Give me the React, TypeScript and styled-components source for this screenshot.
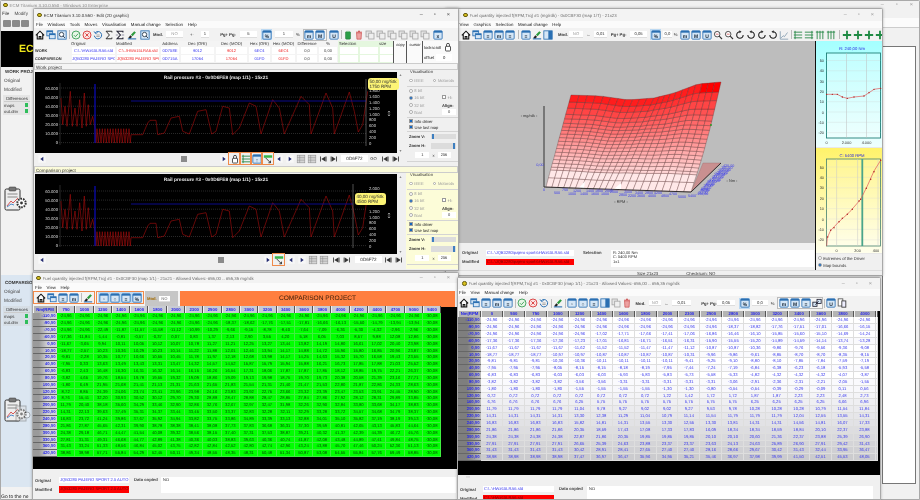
import React from "react";
import styled, { createGlobalStyle } from "styled-components";

const Global = createGlobalStyle`
  html, body { margin: 0; padding: 0; overflow: hidden; background: #f0f0f0; }
  * { box-sizing: border-box; }
  body { font-family: "Liberation Sans", Arial, sans-serif; text-rendering: geometricPrecision; }
`;

/* ---------- data ---------- */
const expand = (s: string) =>
  s.trim().split(/\s+/).flatMap((t) => {
    const [v, n] = t.split("*");
    return Array(n ? Number(n) : 1).fill(v) as string[];
  });

const NM = ["-110,00","-90,00","-70,00","-60,00","0,00","10,00","20,00","40,00","60,00","80,00","100,00","120,00","160,00","200,00","220,00","240,00","280,00","300,00","330,00","360,00","420,00"];
const GREEN_COLS = ["750","1000","1200","1400","1600","1800","2000","2300","2500","2800","3000","3200","3400","3600","3800","4000","4200","4400","4700","5000","5400"];
const WHITE_COLS = ["0","500","750","1000","1200","1400","1600","1800","2000","2300","2500","2800","3000","3200","3400","3600","3800","4000"];

const GREEN = [
  "-24,96*20 -30,08",
  "-24,96*9 -18,37 -18,62 -17,76 -17,51 -17,81 -16,66 -16,13 -15,50 -14,79 -13,94 -13,94 -30,08",
  "-24,96*2 -22,49 -11,87 -11,57 -11,58 -11,12 -10,99 -10,29 -9,66 -9,15 -8,78 -8,40 -7,64 -7,09 -6,36 -5,30 -4,32 -2,96 -2,96 -30,08",
  "-17,36 -11,84 -1,44 -0,81 -0,57 -0,37 0,07 0,83 1,37 2,13 2,90 3,55 4,20 5,18 6,05 7,03 8,57 9,88 12,08 12,86 -30,08",
  "-11,67 -3,65 9,94 10,11 10,05 10,12 10,07 10,78 11,27 11,21 12,25 13,27 13,44 13,82 14,19 14,80 16,61 17,02 20,40 23,98 -30,08",
  "-18,77 -2,57 10,23 10,36 10,29 10,23 10,14 11,22 11,88 12,01 12,46 13,94 14,17 14,88 14,72 15,96 15,80 16,85 20,96 23,87 -30,08",
  "-9,81 -2,28 10,35 10,77 10,66 10,55 10,45 11,78 11,97 12,18 12,68 13,98 14,17 14,25 14,63 15,32 15,70 16,58 19,43 23,55 -30,08",
  "-7,95 0,33 13,63 13,49 13,43 13,31 13,47 14,32 14,57 14,52 15,87 15,79 15,94 15,88 16,21 16,73 17,85 17,88 21,03 25,52 -30,08",
  "-6,83 2,43 16,48 16,30 16,31 16,32 16,14 16,15 16,26 16,54 17,31 18,06 17,87 17,87 17,85 18,12 18,85 19,75 22,21 26,37 -30,08",
  "-3,82 4,65 19,76 18,54 19,78 19,55 19,32 19,09 18,86 19,09 19,13 19,98 18,75 19,70 19,73 20,38 20,58 21,39 23,16 27,71 -30,08",
  "-1,80 6,49 21,95 21,68 21,41 21,13 21,31 21,63 21,65 21,83 21,54 21,31 21,40 21,47 21,53 22,80 21,87 22,86 24,33 28,63 -30,08",
  "8,72 8,85 24,39 24,06 23,74 23,41 23,96 23,98 24,16 23,83 23,92 22,75 23,66 23,32 23,39 23,47 23,53 23,91 24,45 28,90 -30,08",
  "8,76 15,41 32,20 30,93 30,52 30,12 29,70 29,30 28,88 28,47 28,88 28,47 28,85 27,84 27,86 27,92 28,12 28,31 29,89 33,85 -30,08",
  "11,79 20,40 38,18 35,60 34,29 33,46 32,90 32,86 32,76 32,67 32,97 32,47 31,98 32,26 32,90 32,84 33,80 33,68 34,17 38,83 -30,08",
  "14,31 22,13 39,63 37,49 35,31 34,37 33,44 33,45 33,50 33,37 32,83 32,28 32,11 32,29 33,28 33,72 34,57 34,68 34,79 38,37 -30,08",
  "16,83 23,72 41,24 39,86 37,67 35,92 34,94 33,82 33,75 33,86 34,89 33,39 33,13 32,88 34,01 35,10 35,82 37,19 38,19 39,13 -30,08",
  "21,86 27,87 45,65 42,31 39,90 38,78 38,38 38,41 38,08 37,73 37,83 36,68 36,31 37,30 39,59 40,81 42,65 43,13 45,83 44,64 -30,08",
  "24,38 29,18 46,71 44,47 41,54 40,08 39,32 38,56 38,15 37,40 37,31 37,53 38,87 39,21 40,32 41,37 42,39 44,39 46,72 45,76 -30,08",
  "27,81 31,31 49,31 46,68 44,77 42,89 41,38 40,36 40,03 38,83 39,63 40,36 40,74 41,87 42,08 43,48 44,89 47,41 49,84 48,75 -30,08",
  "31,43 33,24 51,33 48,56 46,84 45,02 43,75 42,82 42,84 42,52 42,80 42,74 42,96 43,24 43,88 45,70 47,46 50,24 52,36 51,13 -30,08",
  "38,86 38,98 57,71 55,84 54,29 52,45 50,11 49,34 48,55 48,35 48,31 50,48 51,34 50,87 53,08 54,55 55,84 57,76 59,49 58,85 -30,08",
].map(expand);

const WHITE = [
  "-24,96*18",
  "-24,96*11 -18,37 -18,82 -17,76 -17,51 -17,01 -16,66 -16,15",
  "-24,96*5 -17,02 -17,71 -17,66 -17,41 -17,06 -16,86 -16,46 -16,10 -15,85 -15,60 -15,10 -14,69 -14,24",
  "-17,36*4 -17,23 -17,01 -16,81 -16,71 -16,51 -16,31 -15,90 -15,55 -15,20 -14,89 -14,59 -14,14 -13,74 -13,28",
  "-11,67*4 -11,62 -11,52 -11,52 -11,47 -11,47 -11,12 -10,87 -10,87 -10,36 -9,86 -9,76 -9,56 -9,36 -9,08",
  "-18,77*3 -10,97 -10,97 -10,87 -10,87 -10,87 -10,87 -10,31 -9,96 -9,86 -9,61 -8,85 -8,70 -8,70 -8,35 -8,15",
  "-9,81*3 -10,36 -10,36 -10,11 -10,11 -10,11 -10,11 -9,41 -9,25 -9,10 -8,80 -8,10 -7,85 -7,84 -7,59 -7,19",
  "-7,95*3 -8,05 -8,15 -8,15 -8,18 -8,19 -7,95 -7,44 -7,24 -7,19 -6,84 -6,38 -6,23 -6,18 -5,93 -5,58",
  "-6,83*3 -6,03 -6,03 -6,03 -5,93 -5,83 -5,83 -5,73 -5,58 -5,33 -4,82 -4,32 -4,32 -4,32 -4,07 -3,87",
  "-3,82*4 -3,56 -3,56 -3,31*5 -3,06 -2,91 -2,36 -2,31 -2,21 -2,05 -1,55",
  "-1,80*4 -1,55*4 -1,30 -1,30 -0,80 -0,54 -0,54 -0,39 -0,29 -0,09 0,11 0,56",
  "0,72*8 1,22 1,42 1,72 1,72 1,87 1,87 2,23 2,23 2,48 2,73",
  "6,76*4 6,25 5,75*7 6,25*4 6,66 6,96",
  "11,79*4 11,04 9,78 9,27 9,02 9,02 9,27 9,53 9,78 10,28 10,28 10,28 10,79 11,54 11,84",
  "14,31*4 13,30 12,38 11,29 11,04 10,79 11,14 11,54 11,79 11,79 11,79 12,04 12,55 13,55 14,31",
  "16,83*4 15,82 14,81 14,31 13,55 13,30 12,55 13,30 13,81 14,31 14,31 14,56 14,81 16,07 17,33",
  "21,86*4 20,35 18,59 17,43 17,08 17,33 17,83 16,09 18,34 18,34 18,59 18,84 20,10 22,37 23,88",
  "24,38*4 22,87 21,86 20,35 19,85 19,85 19,85 20,10 20,10 20,60 21,36 22,37 23,88 25,39 26,90",
  "27,91*4 26,65 25,39 24,63 23,88 23,37 23,37 23,63 24,13 24,63 25,89 26,90 27,91 29,42 31,43",
  "31,43*4 30,42 28,91 28,41 27,65 27,40 27,40 28,16 28,66 29,67 30,42 31,43 32,44 33,95 36,47",
  "38,98*4 37,47 36,97 36,47 35,96 34,95 35,21 35,46 36,97 37,98 39,99 41,50 42,51 45,53 48,05",
].map((s) => expand(s).slice(0, 18));

/* ---------- desktop and windows ---------- */
const Desktop = styled.div`
  position: relative; width: 920px; height: 500px; overflow: hidden; background: #f1f1f1; color: #222; font-size: 4.6px; filter: blur(0.3px);
`;
const Win = styled.section<{ $x: number; $y: number; $w: number; $h: number; $z: number; $bg?: string }>`
  position: absolute; left: ${(p) => p.$x}px; top: ${(p) => p.$y}px; width: ${(p) => p.$w}px; height: ${(p) => p.$h}px; z-index: ${(p) => p.$z};
  background: ${(p) => p.$bg || "#f0f0f0"}; display: flex; flex-direction: column; overflow: hidden;
  border: 0.5px solid #a9a9a9; box-shadow: 0 0 3px rgba(0,0,0,.28); border-radius: 1.5px 1.5px 0 0;
`;
const TitleBar = styled.header<{ $h: number; $pad: number; $dim?: boolean }>`
  height: ${(p) => p.$h}px; flex: none; display: flex; align-items: center; gap: 2px; padding: 0 4px 0 ${(p) => p.$pad}px; background: #f3f3f3;
  color: ${(p) => (p.$dim ? "#6e6e6e" : "#333")}; font-size: 4.35px; white-space: nowrap;
`;
const TitleIcon = styled.i`
  width: 4.6px; height: 4.6px; border-radius: 50%; background: #d8c01c; border: 0.6px solid #665c10; flex: none;
`;
const TitleText = styled.span` flex: 1; overflow: hidden; `;
const Caption = styled.span<{ $dim?: boolean }>`
  display: flex; gap: 11px; font-size: 5.5px; color: ${(p) => (p.$dim ? "#999" : "#444")}; padding-right: 4px; align-items: center;
`;
const MenuBar = styled.nav<{ $h: number; $pad: number }>`
  height: ${(p) => p.$h}px; flex: none; display: flex; align-items: center; gap: 4.6px; padding-left: ${(p) => p.$pad}px; background: #fbfbfb; font-size: 4.35px; color: #222; white-space: nowrap;
`;
const Toolbar = styled.div<{ $h: number; $pad?: number }>`
  height: ${(p) => p.$h}px; flex: none; display: flex; align-items: center; padding-left: ${(p) => p.$pad || 0}px; background: #f2f2f2; white-space: nowrap; font-size: 4.3px;
  position: relative;
`;
const Tool = styled.span<{ $on?: boolean; $mark?: boolean }>`
  width: 11px; height: 11px; flex: none; display: flex; align-items: center; justify-content: center;
  background: ${(p) => (p.$on ? "#bcd9f2" : "transparent")}; outline: ${(p) => (p.$mark ? "0.8px solid #ef8a4a" : "none")}; outline-offset: -0.6px;
`;
const Space = styled.span<{ $w: number }>` width: ${(p) => p.$w}px; flex: none; `;
const Sep = styled.span<{ $w: number }>`
  width: ${(p) => p.$w}px; flex: none; height: 9px; position: relative;
  &::after { content: ""; position: absolute; left: 50%; top: 0; bottom: 0; width: 0.5px; background: #bbb; }
`;
const Lbl = styled.span<{ $w: number; $b?: boolean }>`
  width: ${(p) => p.$w}px; flex: none; font-weight: ${(p) => (p.$b ? 700 : 400)}; color: #333; font-size: 4.2px; text-align: center;
`;
const Field = styled.span<{ $w: number; $grey?: boolean }>`
  width: ${(p) => p.$w}px; height: 6.5px; flex: none; background: #fff; color: ${(p) => (p.$grey ? "#999" : "#333")}; font-size: 4.2px; line-height: 6.5px; text-align: center; border-bottom: 0.4px solid #ddd;
`;
const GroupBox = styled.span`
  display: flex; align-items: center; height: 12px; flex: none; border: 0.5px solid #bbb; background: #f6f6f6;
`;

/* ---------- icons ---------- */
type K = "home"|"stack"|"win"|"check"|"cancel"|"undo"|"sigma"|"sigma2"|"brush"|"mag"|"magb"|"green"|"red"|"copy"|"rot"|"rotb"|"graph"|"lines"|"lines2"|"vlines"|"plus"|"tail"|"lock"|"l"|"r"|"first"|"last"|"grid"|"split"|"phones"|"pair";
const Blue = "#2a6fb2", Pale = "#d5e6f6";
const Ico = ({ k, t }: { k: K; t?: string }) => {
  const c: Record<K, React.ReactNode> = {
    home: <path d="M1 6.4 6 1.4l5 5M2.7 5v5.8h6.6V5M5 10.8V7.8h2v3" fill="#fff" stroke="#111" strokeWidth="1.3" />,
    stack: <><rect x="1" y="1" width="7" height="6" fill={Pale} stroke={Blue} /><rect x="1" y="1" width="7" height="1.6" fill={Blue} /><rect x="4" y="4.5" width="7" height="6" fill={Pale} stroke={Blue} /><rect x="4" y="4.5" width="7" height="1.6" fill={Blue} /></>,
    win: <><rect x="1" y="1" width="10" height="10" rx="1" fill={Pale} stroke={Blue} /><rect x="1" y="1" width="10" height="2.2" fill={Blue} /><text x="6" y="9.6" fontSize="6" fontWeight="700" textAnchor="middle" fill="#123">{t}</text></>,
    check: <><circle cx="6" cy="6" r="4.8" fill="#e6f6e6" stroke="#3fa15a" strokeWidth="1.1" /><path d="M3.5 6.2 5.3 8l3.3-3.6" fill="none" stroke="#3fa15a" strokeWidth="1.1" /></>,
    cancel: <><circle cx="6" cy="6" r="4.8" fill="#fbe4e4" stroke="#d93a3a" strokeWidth="1.1" /><path d="m4 4 4 4m0-4-4 4" stroke="#d93a3a" strokeWidth="1.1" /></>,
    undo: <><path d="M2.6 3.4A4.4 4.4 0 1 1 1.6 6.8" fill="none" stroke={Blue} strokeWidth="1.2" /><path d="M1.2 1.6 3 4.4l2.6-1.4" fill="none" stroke={Blue} strokeWidth="1" /><path d="M4 6h4M4 7.8h4" stroke="#777" strokeWidth=".7" /></>,
    sigma: <path d="M9.5 3V1.5h-7L6.5 6l-4 4.5h7V9" fill="none" stroke="#222" strokeWidth="1.1" />,
    sigma2: <><path d="M9.5 3V1.5h-7L6.5 6l-4 4.5h7V9" fill="none" stroke="#223" strokeWidth="1.3" /><path d="M1 6h3M8 6h3" stroke="#557" strokeWidth=".7" /></>,
    brush: <><path d="M1.5 9.5 4 6.3l2 1.8-2.2 2.6z" fill="#222" /><path d="m4.7 5.6 4-4.2 2 1.7-4 4.4z" fill="#2f9c3f" /><rect x="1" y="10" width="10" height="1.3" fill="#2a6fb2" /></>,
    mag: <><circle cx="5" cy="5" r="3.3" fill="#fff" stroke="#333" /><path d="m7.4 7.4 3.4 3.4" stroke="#333" strokeWidth="1.4" /><path d="M3.3 5h3.4" stroke="#c33" strokeWidth=".8" /></>,
    magb: <><rect x="1" y="1" width="10" height="10" fill={Pale} stroke={Blue} /><circle cx="5.4" cy="5.4" r="2.6" fill="#fff" stroke="#234" /><path d="m7.4 7.4 2 2" stroke="#234" strokeWidth="1.2" /></>,
    green: <><rect x="3" y="2" width="6" height="9" rx="1" fill="#2a9d46" stroke="#17652b" strokeWidth=".5" /><rect x="4.2" y="1" width="3.6" height="1.3" fill="#8ccf9a" /></>,
    red: <><path d="M3 3.4h6l-.5 7.6h-5z" fill="#eda1a1" stroke="#c54040" strokeWidth=".7" /><rect x="2.4" y="2" width="7.2" height="1.3" fill="#d96a6a" /><path d="M4.8 1h2.4v1H4.8z" fill="#c54040" /></>,
    copy: <><rect x="1.2" y="1.2" width="6.4" height="7" fill="#e4e4e4" stroke="#a6a6a6" /><rect x="4.4" y="3.8" width="6.4" height="7" fill="#efefef" stroke="#a6a6a6" /></>,
    rot: <><path d="M9.8 6A3.9 3.9 0 1 1 6 2.1" fill="none" stroke="#222" strokeWidth="1.3" /><path d="M5.2 .4 7.8 2.2 5.4 4z" fill="#222" /></>,
    rotb: <><path d="M2.2 6A3.9 3.9 0 1 0 6 2.1" fill="none" stroke="#222" strokeWidth="1.3" /><path d="M6.8 .4 4.2 2.2 6.6 4z" fill="#222" /></>,
    graph: <path d="M1.5 1.5v9.5h9.5M2.5 9.5l2.5-2.6 1.6 1L10.2 3" fill="none" stroke="#68869e" strokeWidth=".8" />,
    lines: <path d="M2.5 1v10M1 2.6h10M1 6h10M1 9.4h10" stroke="#2c8a4a" strokeWidth="1.1" />,
    lines2: <path d="M9.5 1v10M1 2.6h10M1 6h10M1 9.4h10" stroke="#2c8a4a" strokeWidth="1.1" />,
    vlines: <path d="M1 2.5h10M2.6 1v10M6 1v10M9.4 1v10" stroke="#2c8a4a" strokeWidth="1.1" />,
    plus: <path d="M6 1v10M1 6h10" stroke="#1f8a44" strokeWidth="2.2" />,
    tail: <><rect x="1" y="1.5" width="10" height="3" fill="#39b54a" /><path d="M3 4.5l6 6M9 10.5H6.5M9 10.5V8" stroke="#222" strokeWidth="1" fill="none" /></>,
    lock: <><rect x="3" y="5.2" width="6" height="5.6" rx=".8" fill="#fff" stroke="#333" /><path d="M4.2 5.2V3.4a1.8 1.8 0 0 1 3.6 0v1.8" fill="none" stroke="#333" /></>,
    l: <><rect x="1.6" y="1.6" width="8.8" height="8.8" fill="#f8f8f8" /><path d="M7.6 3.4 4 6l3.6 2.6z" fill="#222a70" /></>,
    r: <><rect x="1.6" y="1.6" width="8.8" height="8.8" fill="#f8f8f8" /><path d="M4.4 3.4 8 6 4.4 8.6z" fill="#222a70" /></>,
    first: <path d="M2.5 3v6h1V3zM8.8 3 4 6l4.8 3zM9.2 3h1v6h-1z" fill="#333" />,
    last: <path d="M2 3h1v6H2zM3.4 3 8 6 3.4 9zM8.6 3h1v6h-1z" fill="#333" />,
    grid: <><rect x="1.4" y="1.4" width="9.2" height="9.2" fill="#d5d5d5" stroke="#888" strokeWidth=".6" /><path d="M1.4 4.4h9M1.4 7.4h9M4.4 1.4v9" stroke="#888" strokeWidth=".6" /></>,
    split: <><rect x="1" y="1" width="10" height="10" fill={Pale} stroke={Blue} /><rect x="6.4" y="1" width="4.6" height="10" fill={Blue} /></>,
    phones: <><rect x="1.4" y="1" width="5.6" height="8.6" fill="#fff" stroke="#555" /><rect x="5.8" y="3.5" width="4.8" height="7.5" fill="#eef" stroke="#333" /></>,
    pair: <><rect x="1" y="5" width="5" height="5" fill={Pale} stroke="#223" /><rect x="6" y="1.6" width="5" height="5" fill={Pale} stroke="#223" /><path d="m4 8 4-4" stroke="#223" /></>,
  };
  return <svg width="10" height="10" viewBox="0 0 12 12" aria-hidden="true">{c[k]}</svg>;
};
const T = ({ k, t, on, mark }: { k: K; t?: string; on?: boolean; mark?: boolean }) => (
  <Tool $on={on} $mark={mark}><Ico k={k} t={t} /></Tool>
);

/* ---------- back window ---------- */
const BackTitle = styled.div`
  height: 8px; flex: none; display: flex; align-items: center; gap: 2px; padding-left: 2px; color: #8c8c8c; font-size: 4.4px; white-space: nowrap;
`;
const BackCaption = styled.span`
  margin-left: auto; display: flex; gap: 12px; color: #999; font-size: 5.5px; padding-right: 6px;
`;
const BackMenu = styled.div`
  height: 8px; flex: none; display: flex; align-items: center; gap: 5px; padding-left: 1px; font-size: 4.6px; color: #444;
`;
const BackTools = styled.div`
  height: 12px; flex: none; display: flex; align-items: center; gap: 1px; padding-left: 2px;
`;
const RightStrip = styled.div`
  margin-left: auto; width: 37px; height: 10px; background: #fbfbfb; border-bottom: .5px solid #ccc; border-left: .5px solid #ddd;
`;
const Folder = styled.i`
  width: 8px; height: 7px; background: #8a8a8a; border-radius: 1px;
`;
const BackRow = styled.div` display: flex; flex: 1; min-height: 0; `;
const Sidebar = styled.aside`
  width: 33px; flex: none; display: flex; flex-direction: column; background: #f2f2f2; overflow: hidden; border-right: 1px solid #cfcfcf;
`;
const Logo = styled.div`
  height: 36px; flex: none; margin-top: 2px; background: #000; color: #ece51a; font: 700 10.5px "Liberation Sans", sans-serif; display: flex; align-items: center; padding-left: 18px; overflow: hidden; white-space: nowrap;
`;
const Section = styled.div<{ $top: number; $h: number; $bg?: string }>`
  margin-top: ${(p) => p.$top}px; height: ${(p) => p.$h}px; flex: none; background: ${(p) => p.$bg || "transparent"}; display: flex; flex-direction: column; position: relative;
`;
const SideHead = styled.div<{ $top?: number }>` font-weight: 700; font-size: 4.5px; height: 8px; line-height: 8px; padding-left: 4px; white-space: nowrap; color: #333; margin-top: ${(p) => p.$top || 0}px; `;
const SideRow = styled.div` font-size: 4.7px; height: 9px; line-height: 9px; padding-left: 3px; color: #444; white-space: nowrap; `;
const DiffBox = styled.div`
  margin: 1px 3px 0 2px; display: flex; flex-direction: column; padding: 1px 0 1px 1px; font-size: 4.3px; color: #333; background: rgba(205,205,205,.35);
`;
const DiffHead = styled.div` text-align: center; height: 6px; line-height: 6px; border-bottom: .5px solid #ccc; `;
const DiffRow = styled.div` display: flex; justify-content: space-between; align-items: center; height: 6px; padding-right: 2px; `;
const Led = styled.i` width: 3.4px; height: 3.4px; background: #2fbe5b; `;
const Clip = styled.div<{ $top: number }>` margin: ${(p) => p.$top}px 0 0 3px; flex: none; `;
const Hint = styled.div` position: absolute; left: 1px; top: 494px; font-size: 5px; color: #222; white-space: nowrap; z-index: 1; `;
const BackContent = styled.div`
  flex: 1; position: relative; display: flex; justify-content: flex-end;
`;
const BackPanel = styled.div`
  width: 34px; height: 438px; margin: 17px 3px 0 0; background: #fff; border: .5px solid #777; border-width: .5px 1px 1px .5px;
`;

const Clipboard = ({ ghost }: { ghost?: boolean }) => (
  <svg width={ghost ? 27 : 23} height="26" viewBox={ghost ? "0 0 27 26" : "0 0 23 26"} aria-hidden="true">
    <rect x="1" y="3" width="15" height="21" rx="1.5" fill="#eee" stroke="#333" strokeWidth="1" />
    <rect x="5" y="1" width="7" height="4" rx="1" fill="#777" stroke="#333" strokeWidth=".5" />
    <path d="M3.5 8h10M3.5 11h10" stroke="#aaa" strokeWidth="1.3" />
    <path d="m3 20 4-5 2 2 5-5" fill="none" stroke="#d24444" strokeWidth=".9" />
    <path d="m3 21 4-3 3 1" fill="none" stroke="#3b7dc4" strokeWidth=".9" />
    <circle cx="17.5" cy="17" r="4.2" fill="#fff" stroke="#333" strokeWidth="2" strokeDasharray="1.6 1" />
    <circle cx="17.5" cy="17" r="1.4" fill="#333" />
    {ghost && <g opacity=".45"><rect x="12" y="9" width="10" height="15" fill="#ddd" stroke="#666" /><circle cx="23" cy="18" r="3" fill="#fff" stroke="#666" /></g>}
  </svg>
);

/* ---------- main edit window ---------- */
const InfoGrid = styled.div`
  height: 22px; flex: none; display: grid; padding-left: 1px; background: #f4f4f4; font-size: 4.2px; align-items: center; text-align: center;
  grid-template-columns: 36px 45px 44px 20px 35px 33px 23px 25px 22px 20px 20px 20px 15px 13px 16px 1fr;
  grid-template-rows: 5px 8.5px 8.5px;
`;
const InfoHead = styled.span<{ $l?: boolean }>` color: #333; white-space: nowrap; text-align: ${(p) => (p.$l ? "left" : "center")}; `;
const InfoLab = styled.span` font-weight: 700; font-size: 3.9px; text-align: left; color: #333; `;
const InfoVal = styled.span<{ $c: string }>`
  background: #fff; color: ${(p) => p.$c}; margin: 0 1px; height: 7px; line-height: 7px; overflow: hidden; white-space: nowrap; font-size: 4.1px;
`;
const SelCell = styled.span`
  background: #fff; margin: 0 .5px; height: 7px; flex: 1;
`;
const GreenBack = styled.span<{ $col?: string }>`
  grid-column: ${(p) => p.$col || "auto"}; background: #e5f7df; align-self: stretch; display: flex; align-items: center; padding-left: 1px; color: #333; white-space: nowrap;
`;
const InfoCol = styled.div<{ $col: number }>`
  grid-column: ${(p) => p.$col}; grid-row: 1 / 4; align-self: stretch; border-left: .8px solid #555; display: flex; flex-direction: column; font-size: 4px; padding: 1px 0 0 1px; background: #fafafa; white-space: nowrap; overflow: hidden;
`;
const LockRow = styled.div`
  display: flex; align-items: center; gap: 2px; font-size: 4.2px; white-space: nowrap; height: 11px;
`;
const OffField = styled.span`
  background: #fff; width: 16px; height: 7px; line-height: 7px; text-align: center;
`;
const ProjectBar = styled.div<{ $y?: boolean }>`
  height: 7px; flex: none; line-height: 7px; padding-left: 1px; font-size: 4.6px; color: #333; background: ${(p) => (p.$y ? "#fbfbda" : "#f4f4f4")}; border: .4px solid #ccc;
`;
const Pane = styled.div<{ $h: number }>` height: ${(p) => p.$h}px; flex: none; display: flex; background: #f0f0f0; `;
const PaneLeft = styled.div` width: 370px; flex: none; display: flex; flex-direction: column; `;
const ChartRow = styled.div<{ $mt: number; $h: number }>` display: flex; height: ${(p) => p.$h}px; margin-top: ${(p) => p.$mt}px; flex: none; `;
const ChartBlack = styled.div`
  width: 362px; margin-left: 1px; height: 100%; background: #000; flex: none; position: relative;
`;
const VScroll = styled.div`
  flex: 1; display: flex; flex-direction: column; justify-content: space-between; align-items: center; color: #888; font-size: 4px; background: #f0f0f0;
`;
const Tip = styled.div<{ $x: number; $y: number }>`
  position: absolute; left: ${(p) => p.$x}px; top: ${(p) => p.$y}px; background: #fdf475; border-radius: 3px; padding: .6px 1px .6px 1.4px; color: #333; font-size: 4.6px; line-height: 5.4px; white-space: nowrap; width: 31px; z-index: 4;
`;
const BottomBar = styled.div`
  height: 11px; flex: none; display: flex; align-items: center; white-space: nowrap; font-size: 4.4px; position: relative;
`;
const Thumb = styled.i` width: 6px; height: 6px; background: #8b8b8b; flex: none; `;
const GoField = styled.span`
  width: 27px; height: 7px; line-height: 7px; text-align: center; background: #fff; font-size: 4.6px; color: #333; flex: none;
`;
const Side = styled.aside<{ $y?: boolean }>`
  width: 54px; flex: none; margin-left: 2px; display: flex; flex-direction: column; padding: 0 1px; font-size: 4.1px; color: #444; background: ${(p) => (p.$y ? "#fcfcd8" : "#f0f0f0")};
`;
const SideLegend = styled.div` height: 5.5px; line-height: 4px; padding-left: 3px; color: #333; white-space: nowrap; `;
const SideBlock = styled.div<{ $h: number }>`
  height: ${(p) => p.$h}px; flex: none; border-bottom: .5px solid #d4d4d4; position: relative; display: flex; flex-direction: column; justify-content: space-around; padding: .5px 0 .5px 2px;
`;
const OptRow = styled.div` display: flex; align-items: center; gap: 1.5px; color: #9a9a9a; white-space: nowrap; `;
const Dot = styled.i<{ $on?: boolean }>`
  width: 3.8px; height: 3.8px; border-radius: 50%; border: .5px solid #aaa; background: ${(p) => (p.$on ? "#1b6cc2" : "#fff")}; flex: none; box-shadow: ${(p) => (p.$on ? "0 0 0 .6px #1b6cc2 inset" : "none")};
`;
const Box = styled.i<{ $on?: boolean }>`
  width: 4px; height: 4px; background: ${(p) => (p.$on ? "#1466c0" : "#fff")}; border: .4px solid #999; flex: none;
`;
const CheckRow = styled.div` display: flex; align-items: center; gap: 1.5px; color: #222; white-space: nowrap; `;
const AlignBox = styled.div`
  position: absolute; right: 3px; top: 8px; display: flex; flex-direction: column; gap: 1.5px; align-items: flex-start; color: #333; font-weight: 700;
`;
const SpinBox = styled.span<{ $w: number }>`
  width: ${(p) => p.$w}px; height: 5.6px; line-height: 5.6px; background: #fff; text-align: center; color: #333; font-size: 4px; font-weight: 400; display: inline-block;
`;
const ZoomRow = styled.div` display: flex; align-items: center; justify-content: space-between; font-weight: 700; color: #333; white-space: nowrap; padding-right: 3px; `;
const Track = styled.div<{ $end?: boolean }>`
  width: 25px; height: 5.4px; background: #dcdcdc; display: flex; justify-content: ${(p) => (p.$end ? "flex-end" : "flex-start")}; padding: 0 .8px;
`;
const Knob = styled.i` width: 2.4px; height: 5.4px; background: #3e7fc0; `;
const SpinRow = styled.div` display: flex; align-items: center; gap: 3px; justify-content: center; color: #333; padding-right: 2px; `;

/* 2D chart */
const Z = [[180,210],[185,290],[192,235],[198,295],[208,190],[214,295],[222,240],[228,295],[236,215],[243,300],[250,195],[256,295],[262,230],[268,290],[275,265],[282,300],[285,345]];
const Z2 = [[390,320],[425,320],[440,285],[447,277],[465,277],[470,320],[490,315],[510,270],[535,265],[545,310],[565,318],[590,250],[615,245],[632,318],[645,310],[665,235],[685,240],[695,320],[715,300],[745,225],[765,235],[780,318],[815,215],[835,240],[850,318],[900,205],[925,230],[930,318],[975,195],[995,240],[1000,318],[1045,192],[1060,250],[1072,312],[1085,290],[1100,190]];
const makeTrace = (dy: number) => {
  const dense: number[][] = [];
  for (let x = 288; x < 390; x += 4) dense.push([x, x % 8 === 0 ? 302 : 345]);
  return [...Z, ...dense, ...Z2].map(([x, y]) => `${(x / 3 - 34).toFixed(1)},${(y / 3 - 43 + dy).toFixed(1)}`).join(" ");
};
const LEFT_AX = ["60.000","50.000","40.000","30.000","20.000","10.000","0"];
const RIGHT_AX = ["2.000","1.800","1.600","1.400","1.200","1.000","800","600","400","200","0"];
const Chart2D = ({ curX, blueY, dy, hidden }: { curX: number; blueY: number; dy: number; hidden: string[] }) => (
  <svg width="362" height="81" viewBox="0 0 362 81" aria-label="Rail pressure chart" style={{ display: "block" }}>
    <text x="181" y="7" fontSize="4.8" fontWeight="700" fill="#e8e8e8" textAnchor="middle">Rail pressure #3 - 0x0D6FE8 (map 1/1) - 15x21</text>
    <line x1="25" x2="25" y1="11" y2="73" stroke="#444" strokeWidth=".6" />
    {LEFT_AX.map((t, i) => (
      <g key={t}>
        <line x1="22" x2="331" y1={17 + i * 9.1 + dy} y2={17 + i * 9.1 + dy} stroke="#777" strokeWidth=".35" strokeDasharray="1 1" />
        <text x="23" y={18.5 + i * 9.1 + dy} fontSize="4.2" fill="#d8d8d8" textAnchor="end">{t}</text>
      </g>
    ))}
    {RIGHT_AX.filter((t) => !hidden.includes(t)).map((t) => (
      <text key={t} x="334" y={15.5 + RIGHT_AX.indexOf(t) * 5.8 + dy} fontSize="4.2" fill="#d8d8d8">{t}</text>
    ))}
    <polyline points={makeTrace(dy)} fill="none" stroke="#a80d0d" strokeWidth=".6" />
    <line x1="60" x2="60" y1="12" y2={72 + dy} stroke="#0a0ab0" strokeWidth="1.3" />
    <line x1="96" x2={curX} y1={blueY} y2={blueY} stroke="#0c0c9a" strokeWidth=".9" />
    <line x1={curX} x2={curX} y1={dy < 0 ? 7 : 10} y2="74" stroke="#888" strokeWidth=".6" />
    <path d="M354 39v5m-1.2-3.8 1.2-1.2 1.2 1.2m-2.4 2.6 1.2 1.2 1.2-1.2" stroke="#ddd" strokeWidth=".5" fill="none" />
  </svg>
);

const SidePanel = ({ y }: { y?: boolean }) => (
  <Side $y={y}>
    <SideLegend>Visualisation</SideLegend>
    <SideBlock $h={11}><OptRow><Dot /> IEEE <Space $w={6} /> <Dot /> Motorola</OptRow></SideBlock>
    <SideBlock $h={31}>
      <OptRow><Dot /> 8 bit</OptRow>
      <OptRow><Dot $on /> 16 bit</OptRow>
      <OptRow><Dot /> 32 bit</OptRow>
      <OptRow><Dot /> float</OptRow>
      <AlignBox><OptRow><Box /> +/-</OptRow><Space $w={1} />Align:<SpinBox $w={14}>0</SpinBox></AlignBox>
    </SideBlock>
    <SideBlock $h={14}>
      <CheckRow><Box $on /> Info driver</CheckRow>
      <CheckRow><Box $on /> Use last map</CheckRow>
    </SideBlock>
    <SideBlock $h={30}>
      <ZoomRow>Zoom V:<Track><Knob /></Track></ZoomRow>
      <ZoomRow>Zoom H:<Track $end><Knob /></Track></ZoomRow>
      <SpinRow><SpinBox $w={14}>1</SpinBox> x <SpinBox $w={13}>256</SpinBox></SpinRow>
    </SideBlock>
  </Side>
);

const infoCols = ["Original","Modified","Address","Dec (ORI)","Dec (MOD)","Hex (ORI)","Hex (MOD)","Difference","%"];
const workRow = ["C:\\..\\HW#15LRA6.std","C:\\..\\HW#15LRA6.std","0D758E","9012","9012","6EC4","6EC4","0,0","0,00"];
const cmpRow = ["JQB3280 PAJERO SPOI","JQB3280 PAJERO SPOI","0D715A","17064","17064","01FD","01FD","0,0","0,00"];
const colorsFor = (i: number) => (i === 0 || i === 2 || i === 3 || i === 5 ? "#3434f0" : i === 1 || i === 4 || i === 6 ? "#f02020" : "#444");

/* ---------- 3D window ---------- */
const View3D = styled.div` flex: 1; min-height: 0; display: flex; background: #bdbdbd; `;
const ViewLeft = styled.div` flex: 1; min-width: 0; display: flex; flex-direction: column; `;
const Plot3D = styled.div` flex: 1; min-height: 0; background: #bdbdbd; padding-left: 15px; `;
const Graphs = styled.aside`
  width: 67px; flex: none; border-left: 1.4px solid #111; display: flex; flex-direction: column; background: #f0f0f0;
`;
const GraphBox = styled.div<{ $h: number; $a: string; $b: string }>`
  height: ${(p) => p.$h}px; flex: none; background: linear-gradient(${(p) => p.$a}, ${(p) => p.$b}); border-bottom: .8px solid #e8e8e8;
`;
const GraphOpts = styled.div`
  flex: 1; display: flex; flex-direction: column; justify-content: center; gap: 2px; padding-left: 2px; font-size: 4.2px; color: #333; background: #f0f0f0;
`;
const OptLine = styled.div` display: flex; align-items: center; gap: 1.5px; white-space: nowrap; `;
const InfoStrip = styled.div`
  height: 27px; flex: none; background: #f0f0f0; display: flex; padding: 7px 0 0 16px; gap: 0; font-size: 4.4px; color: #333; font-weight: 400;
`;
const FileCol = styled.div` display: flex; flex-direction: column; gap: 2.8px; `;
const FileLine = styled.div` display: flex; align-items: center; height: 6.4px; `;
const FileLab = styled.span<{ $w: number }>` width: ${(p) => p.$w}px; flex: none; font-weight: 700; font-size: 4.2px; color: #444; white-space: nowrap; `;
const FileVal = styled.span<{ $w: number; $red?: boolean }>`
  width: ${(p) => p.$w}px; height: 6.4px; line-height: 6.4px; flex: none; background: ${(p) => (p.$red ? "#ff0000" : "#fff")}; color: ${(p) => (p.$red ? "#700" : "#3434f0")}; font-size: 4.1px; padding-left: 1px; white-space: nowrap; overflow: hidden;
`;
const SelBox = styled.div<{ $w: number; $h: number }>`
  width: ${(p) => p.$w}px; height: ${(p) => p.$h}px; flex: none; background: #fff; font-size: 4px; line-height: 4.8px; padding: 1px 2px; color: #333; white-space: pre-line;
`;
const Status = styled.footer`
  height: 5.5px; flex: none; background: #f0f0f0; display: flex; font-size: 4.3px; line-height: 5.5px; color: #333; white-space: nowrap; padding-left: 191px; border-top: .4px solid #ddd;
`;

const TOP_CURVE = [[570,94],[600,95],[627,99],[653,97],[673,92],[697,83],[720,81]];
const BOT_CURVE = [[545,186],[610,189],[690,191]];
const interp = (pts: number[][], u: number) => {
  const s = u * (pts.length - 1);
  const i = Math.min(Math.floor(s), pts.length - 2);
  const f = s - i;
  return [pts[i][0] + (pts[i + 1][0] - pts[i][0]) * f, pts[i][1] + (pts[i + 1][1] - pts[i][1]) * f];
};
const VS = [0,.09,.17,.2,.24,.28,.32,.36,.4,.44,.48,.52,.56,.6,.64,.68,.73,.78,.85,.92,1];
const US = Array.from({ length: 23 }, (_, i) => i / 22);
const point = (u: number, v: number): [number, number] => {
  const a = interp(TOP_CURVE, u), b = interp(BOT_CURVE, u);
  const w = Math.pow(v, .95);
  const bend = Math.sin(v * Math.PI) * (u > .55 ? (u - .55) * 14 : 0);
  return [b[0] + (a[0] - b[0]) * w, b[1] + (a[1] - b[1]) * w + bend];
};
const Mesh = () => {
  const cells: React.ReactNode[] = [];
  for (let r = 0; r < VS.length - 1; r++) {
    for (let c = 0; c < US.length - 1; c++) {
      const p = [point(US[c], VS[r]), point(US[c + 1], VS[r]), point(US[c + 1], VS[r + 1]), point(US[c], VS[r + 1])];
      const v = VS[r];
      const hot = (r >= 19 && c >= 19) ? 0 : (r < 2 ? 232 : Math.pow(1 - v, .85) * 250);
      cells.push(<polygon key={`${r}-${c}`} points={p.map((q) => `${q[0].toFixed(1)},${q[1].toFixed(1)}`).join(" ")} fill={`rgb(255,${Math.round(hot)},${Math.round(hot)})`} stroke="#5a2c2c" strokeWidth=".32" />);
    }
  }
  return <>{cells}</>;
};
const RPM_LABELS: [string, number, number][] = [["0",543,190],["500",556,193],["750",564,190],["1000",571,194],["1200",576,191],["1400",583,194],["1400",589,191],["1600",594,194],["1800",598,191],["1000",604,194],["2000",608,191],["2300",613,192],["2800",622,195],["3000",627,192],["2200",631,196],["3400",638,193],["3600",640,196],["2800",648,193],["4000",651,196],["4200",657,193],["4800",664,196],["4700",672,194],["5000",681,197],["5400",691,196]];
const NM_LABELS = Array.from({ length: 21 }, (_, i) => {
  const f = i / 20;
  return [NM[NM.length - 1 - i], 722 - 27 * Math.pow(f, .9), 166 + 28 * Math.pow(f, .9)] as [string, number, number];
});

const Surface = () => (
  <svg width="356" height="203" viewBox="460 40 356 203" aria-label="3D map" style={{ display: "block" }}>
    <polygon points="690,191 702,162 720,162" fill="#c99090" stroke="#9c7070" strokeWidth=".4" />
    <Mesh />
    <polygon points="578,187 584,180 583,187" fill="#fff" />
    <polygon points="613,188 620,182 620,188" fill="#fff" />
    <path d="M543 105V186L690 191 720 162" fill="none" stroke="#222" strokeWidth=".9" />
    <circle cx="710" cy="124" r=".9" fill="#1a9a1a" />
    <text x="528" y="115.5" fontSize="3.9" fill="#333" textAnchor="middle">- mg/rdk -</text>
    <text x="539" y="164.5" fontSize="3.9" fill="#3a3aee" textAnchor="middle">0,00</text>
    {RPM_LABELS.map(([t, x, y], i) => <text key={i} x={x} y={y} fontSize="3.7" fill="#3a3aee" textAnchor="middle">{t}</text>)}
    {NM_LABELS.map(([t, x, y], i) => <text key={i} x={x} y={y} fontSize="3.7" fill="#3a3aee">{t}</text>)}
    <text x="620" y="202" fontSize="3.9" fill="#333" textAnchor="middle">- RPM -</text>
    <text x="731" y="181" fontSize="3.9" fill="#333" textAnchor="middle">- Nm -</text>
  </svg>
);

const toAbs = (p: number[], y0: number) => `${(p[0] / 3 + 460 - 817).toFixed(1)},${(p[1] / 3 + y0).toFixed(1)}`;
const GraphA = () => {
  const pts = [[1103,280],[1120,280],[1135,280],[1150,288],[1165,292],[1185,288],[1215,285],[1230,275],[1245,265],[1265,262]];
  const line = pts.map((p) => toAbs(p, 0 - 40)).join(" ");
  return (
    <svg width="65.5" height="107" viewBox="0 0 65.5 107" aria-label="Row graph" style={{ display: "block" }}>
      <text x="36" y="9" fontSize="4.2" fill="#2929e0" textAnchor="middle">R: 240,00 Nm</text>
      <rect x="10.5" y="12" width="54" height="85" fill="rgba(255,255,255,.25)" stroke="#1f7f78" strokeWidth=".9" />
      {[30.5, 50.5].map((x) => <line key={x} x1={x} x2={x} y1="12" y2="97" stroke="#bcbcbc" strokeWidth=".5" />)}
      {["50","40","30","20","10","0","-10","-20"].map((t, i) => (
        <g key={t}>
          <line x1="10.5" x2="64.5" y1={19.5 + i * 10.3} y2={19.5 + i * 10.3} stroke="#cfcfcf" strokeWidth=".3" />
          <text x="8" y={21 + i * 10.3} fontSize="3.9" fill="#333" textAnchor="end">{t}</text>
        </g>
      ))}
      <polyline points={line} fill="none" stroke="#e25a5a" strokeWidth=".7" />
      {pts.map((p, i) => <circle key={i} cx={p[0] / 3 + 460 - 817} cy={p[1] / 3 - 40} r=".7" fill="#a22" />)}
      {[["0",10.5],["2.000",30.5],["4.000",50.5]].map(([t, x]) => <text key={t as string} x={x} y="103" fontSize="3.9" fill="#333" textAnchor="middle">{t}</text>)}
    </svg>
  );
};
const GraphB = () => {
  const pts = [[1103,345],[1105,320],[1115,298],[1140,272],[1170,245],[1205,205],[1225,165],[1245,120],[1265,88]];
  const y0 = 130 - 147;
  const line = pts.map((p) => toAbs(p, y0)).join(" ");
  return (
    <svg width="65.5" height="106" viewBox="0 0 65.5 106" aria-label="Column graph" style={{ display: "block" }}>
      <text x="36" y="9" fontSize="4.2" fill="#2929e0" textAnchor="middle">C: 5400 RPM</text>
      <rect x="10.5" y="11" width="54" height="87" fill="rgba(255,255,255,.2)" stroke="#45806f" strokeWidth=".8" />
      {[20.6, 41.6, 62].map((x) => <line key={x} x1={x} x2={x} y1="11" y2="98" stroke="#c9c9c9" strokeWidth=".5" />)}
      {["50","40","30","20","10","0","-10","-20"].map((t, i) => (
        <g key={t}>
          <line x1="10.5" x2="64.5" y1={19 + i * 10.4} y2={19 + i * 10.4} stroke="#d5d5d5" strokeWidth=".3" />
          <text x="8" y={20.5 + i * 10.4} fontSize="3.9" fill="#333" textAnchor="end">{t}</text>
        </g>
      ))}
      <rect x="45.4" y="11" width="1.8" height="87" fill="#4aa58a" />
      <polyline points={line} fill="none" stroke="#e25a5a" strokeWidth=".7" />
      {[[1106,318],[1115,298],[1125,290],[1140,272],[1150,262],[1165,250],[1180,235],[1200,210],[1205,205],[1222,172],[1235,145],[1245,122],[1265,88]].map((p, i) => <circle key={i} cx={p[0] / 3 + 460 - 817} cy={p[1] / 3 + y0} r=".75" fill="#a22" />)}
      {[["0",20.6],["200",41.6],["400",60]].map(([t, x]) => <text key={t as string} x={x} y="104" fontSize="3.9" fill="#333" textAnchor="middle">{t}</text>)}
    </svg>
  );
};

/* ---------- table windows ---------- */
const ColorBand = styled.div<{ $h: number }>`
  height: ${(p) => p.$h}px; flex: none; display: flex; align-items: stretch; background: #f3f3f3; white-space: nowrap;
`;
const OrangeBox = styled.div`
  display: flex; align-items: center; flex: none; border: .9px solid #f0894a; margin-right: 1px; height: 13px; padding: 0 1px;
`;
const ModBox = styled.div`
  width: 33px; flex: none; display: flex; align-items: center; gap: 2px; padding-left: 2px; background: #c6c6c6; margin-right: 2px; font-size: 4.2px; font-weight: 700; color: #a26a00;
`;
const OrangeTitle = styled.div`
  flex: 1; background: #ff7f3f; color: #3a1d08; font-size: 6.6px; display: flex; align-items: center; justify-content: center; margin-right: 3px;
`;
const Table = styled.div<{ $cols: string; $head: number }>`
  display: grid; flex: none; grid-template-columns: ${(p) => p.$head}px ${(p) => p.$cols}; grid-auto-rows: 6.85px;
  background: #000; font-size: 4.2px;
`;
const ColHead = styled.div<{ $dark?: boolean }>`
  height: 7.8px; margin-top: -1px; background: ${(p) => (p.$dark ? "#b4b4b4" : "#c8cbd2")}; color: #2626ea; font-weight: 700; text-align: center; line-height: 7.8px; border-left: .5px solid #efefef; border-right: .5px solid #555; white-space: nowrap; font-size: 4.3px;
`;
const RowHead = styled.div<{ $dark?: boolean }>`
  background: ${(p) => (p.$dark ? "linear-gradient(90deg,#7e7e7e 0,#7e7e7e 40%,#bdbdbd 100%)" : "linear-gradient(90deg,#9a9a9a 0,#9a9a9a 25%,#d2d2d6 60%,#d2d2d6 100%)")}; color: #2828ec; font-weight: 700; text-align: right; padding-right: 1.5px; line-height: 6.85px; border-bottom: .5px solid #666; white-space: nowrap;
`;
const GreenCell = styled.div`
  background: #00ff00; color: #043e04; text-align: center; line-height: 6.85px; border-right: .4px solid #3fef3f; border-bottom: .4px solid #3fef3f; white-space: nowrap; overflow: hidden;
`;
const WhiteCell = styled.div<{ $g: number }>`
  background: rgb(${(p) => p.$g},${(p) => p.$g},${(p) => p.$g + 3}); color: #3939ee; text-align: center; line-height: 6.85px; border-right: .4px solid #dedede; border-bottom: .4px solid #dedede; white-space: nowrap; overflow: hidden;
`;
const BlackBar = styled.div<{ $h: number }>` height: ${(p) => p.$h}px; flex: none; background: #000; `;
const BlackRest = styled.div` flex: 1; background: #000; `;
const TableWrap = styled.div` display: flex; flex: none; height: auto; `;
const TableFoot = styled.div<{ $top: number }>`
  display: flex; padding: ${(p) => p.$top}px 0 0 2px; gap: 0; font-size: 4.3px; color: #333; background: #f0f0f0; flex: 1;
`;
const Dash = styled.div` height: 4px; flex: none; padding-left: 8px; color: #888; font-size: 4px; line-height: 4px; `;

const Grey = (i: number) => (i < 10 ? (i % 2 ? 250 : 255) : Math.round(248 - (i - 10) * 4.5));

export default function App() {
  return (
    <Desktop>
      <Global />
      <Win $x={0} $y={0} $w={920} $h={500} $z={1} $bg="#f1f1f1">
        <BackTitle><TitleIcon /><span>ECM Titanium 3.10.0.550 - Windows 10 Enterprise</span><BackCaption><span>–</span><span>▫</span><span>×</span></BackCaption></BackTitle>
        <BackMenu><span>File</span><span>Modify</span></BackMenu>
        <BackTools><Folder /><Folder /><Folder /><RightStrip /></BackTools>
        <BackRow>
          <Sidebar>
            <Logo>EC</Logo>
            <Section $top={1} $h={47}>
              <SideHead>WORK PROJECT</SideHead>
              <SideRow>Original</SideRow>
              <SideRow>Modified</SideRow>
              <DiffBox><DiffHead>Differences</DiffHead><DiffRow>maps<Led /></DiffRow><DiffRow>out.driv<Led /></DiffRow></DiffBox>
            </Section>
            <Clip $top={71}><Clipboard /></Clip>
            <Section $top={62} $h={212} $bg="#dbe6f1">
              <SideHead $top={4}>COMPARISON</SideHead>
              <SideRow>Original</SideRow>
              <SideRow>Modified</SideRow>
              <DiffBox><DiffHead>Differences</DiffHead><DiffRow>maps<Led /></DiffRow><DiffRow>out.driv<Led /></DiffRow></DiffBox>
              <Clip $top={71}><Clipboard ghost /></Clip>
            </Section>
          </Sidebar>
          <BackContent><BackPanel /></BackContent>
        </BackRow>
      </Win>
      <Hint>Go to the ne</Hint>

      {/* 2D editor */}
      <Win $x={33} $y={8} $w={426} $h={263} $z={4}>
        <TitleBar $h={12} $pad={3}><TitleIcon /><TitleText>ECM Titanium 3.10.0.550 - Edit (2D graphic)</TitleText><Caption><span>–</span><span>▫</span><span>×</span></Caption></TitleBar>
        <MenuBar $h={7} $pad={2}>
          {["File","Windows","Tools","Moves","Visualisation","Manual change","Selection","Help"].map((m) => <span key={m}>{m}</span>)}
        </MenuBar>
        <Toolbar $h={13}>
          <T k="home" /><T k="stack" /><T k="magb" /><Sep $w={3} />
          <T k="check" /><T k="cancel" /><T k="undo" /><T k="sigma" /><T k="sigma2" /><Space $w={1} /><T k="brush" /><Space $w={2} /><T k="magb" />
          <Lbl $w={16} $b>Mod.</Lbl><Field $w={17} $grey>NO</Field><Lbl $w={18}>+·</Lbl><Field $w={8}>1</Field>
          <Space $w={7} /><Lbl $w={24} $b>Pg+ Pg-</Lbl><Field $w={17}>5</Field><Space $w={4} />
          <T k="win" t="%" on /><Space $w={3} /><Field $w={18}>1</Field><Lbl $w={9.5}>%</Lbl>
          <GroupBox><T k="win" t="m" /><T k="win" t="M" /></GroupBox><Space $w={2} /><T k="win" t="U" /><Sep $w={3} />
          <T k="green" /><T k="red" />
          <T k="copy" /><T k="copy" /><T k="copy" /><T k="copy" /><T k="copy" /><T k="copy" /><Space $w={2} /><T k="win" t="x" />
        </Toolbar>
        <InfoGrid>
          <span />
          {infoCols.map((c, i) => <InfoHead key={c} $l={i < 2}>{c}</InfoHead>)}
          <GreenBack $col="11 / span 2">Selection</GreenBack>
          <GreenBack $col="13">size</GreenBack>
          <InfoCol $col={14}>copy</InfoCol>
          <InfoCol $col={15}>cursor</InfoCol>
          <InfoCol $col={16}>
            <LockRow>lockscroll <Ico k="lock" /></LockRow>
            <LockRow>offset <OffField>0</OffField></LockRow>
          </InfoCol>
          <InfoLab>WORK</InfoLab>
          {workRow.map((v, i) => <InfoVal key={i} $c={colorsFor(i)}>{v}</InfoVal>)}
          <GreenBack><SelCell /></GreenBack><GreenBack><SelCell /></GreenBack><GreenBack><SelCell /></GreenBack>
          <InfoLab>COMPARISON</InfoLab>
          {cmpRow.map((v, i) => <InfoVal key={i} $c={colorsFor(i)}>{v}</InfoVal>)}
          <GreenBack><SelCell /></GreenBack><GreenBack><SelCell /></GreenBack><GreenBack><SelCell /></GreenBack>
        </InfoGrid>
        <ProjectBar>Work project</ProjectBar>
        <Pane $h={96}>
          <PaneLeft>
            <ChartRow $mt={2} $h={81}>
              <ChartBlack><Chart2D curX={331} blueY={29} dy={-1} hidden={["2.000"]} /><Tip $x={333} $y={6}>50,00 mg/Stk<br />1750 RPM</Tip></ChartBlack>
              <VScroll><span>▴</span><span>▾</span></VScroll>
            </ChartRow>
            <BottomBar>
              <Space $w={2} /><T k="l" /><Space $w={134} /><Thumb /><Space $w={31} /><T k="r" />
              <T k="lock" mark /><T k="lines" mark /><T k="win" t="↑" mark /><T k="tail" mark />
              <T k="l" /><T k="r" /><T k="grid" /><T k="grid" /><T k="first" /><T k="last" /><Space $w={2} /><GoField>0D6F72</GoField><Lbl $w={11}>GO</Lbl><T k="first" /><T k="last" />
            </BottomBar>
          </PaneLeft>
          <SidePanel />
        </Pane>
        <ProjectBar $y>Comparison project</ProjectBar>
        <Pane $h={96}>
          <PaneLeft>
            <ChartRow $mt={1} $h={80}>
              <ChartBlack><Chart2D curX={318} blueY={30} dy={0} hidden={["1.800","1.600","1.400"]} /><Tip $x={320} $y={19}>40,00 mg/Stk<br />4500 RPM</Tip></ChartBlack>
              <VScroll><span>▴</span><span>▾</span></VScroll>
            </ChartRow>
            <BottomBar>
              <Space $w={2} /><T k="l" /><Space $w={171} /><Thumb /><Space $w={38} /><T k="r" /><T k="tail" mark /><Space $w={1} />
              <T k="l" /><T k="r" /><T k="grid" /><T k="grid" /><Space $w={1} /><T k="first" /><T k="last" /><Space $w={3} /><GoField>0D6F72</GoField><T k="first" /><T k="last" />
            </BottomBar>
          </PaneLeft>
          <SidePanel y />
        </Pane>
      </Win>

      {/* 3D */}
      <Win $x={445} $y={8} $w={438} $h={268} $z={3}>
        <TitleBar $h={12} $pad={17} $dim><TitleIcon /><TitleText>Fuel quantity injected f(RPM,Trq) #1 (mg/rdk) - 0x0CBF30 (map 1/T) - 21x23</TitleText><Caption $dim><span>–</span><span>▫</span><span>×</span></Caption></TitleBar>
        <MenuBar $h={7} $pad={2}>
          {["File","View","Graphics","Selection","Manual change","Help"].map((m) => <span key={m}>{m}</span>)}
        </MenuBar>
        <Toolbar $h={13} $pad={14}>
          <T k="home" /><T k="stack" /><T k="win" t="≡" /><T k="win" t="m" /><T k="win" t="≡" /><Sep $w={5} />
          <T k="win" t="≡" /><T k="brush" /><T k="split" /><Space $w={4} />
          <Lbl $w={12} $b>Mod.</Lbl><Field $w={14} $grey>NO</Field><Lbl $w={11}>←</Lbl><Field $w={13}>0,01</Field>
          <Lbl $w={23} $b>Pg+ Pg-</Lbl><Field $w={17}>0,05</Field><Space $w={3} />
          <T k="win" t="%" on /><Space $w={2} /><Field $w={9}>0,0</Field><Lbl $w={7}>%</Lbl>
          <T k="win" t="m" /><T k="win" t="M" /><T k="win" t="U" /><T k="mag" /><T k="mag" /><T k="rot" /><T k="rotb" /><T k="rot" /><T k="rotb" /><T k="graph" /><Sep $w={3} />
          <T k="lines" /><T k="lines2" /><T k="vlines" /><T k="vlines" /><Sep $w={5} /><T k="plus" /><T k="plus" /><T k="plus" /><T k="plus" />
        </Toolbar>
        <View3D>
          <ViewLeft>
            <Plot3D><Surface /></Plot3D>
            <InfoStrip>
              <FileCol>
                <FileLine><FileLab $w={24}>Original</FileLab><FileVal $w={88}>C:\..\JQB3280\pajero sports\HW#15LRA6.std</FileVal></FileLine>
                <FileLine><FileLab $w={24}>Modified</FileLab><FileVal $w={88} $red>C:\..\JQB3280\pajero sports\HW#15LRA6.std</FileVal></FileLine>
              </FileCol>
              <Space $w={9} /><FileLab $w={28}>Selection</FileLab>
              <SelBox $w={203} $h={17.5}>{"R: 240,00 Nm\nC: 5400 RPM\n1x1"}</SelBox>
            </InfoStrip>
          </ViewLeft>
          <Graphs>
            <GraphBox $h={107} $a="#a4ffff" $b="#eefffe"><GraphA /></GraphBox>
            <GraphBox $h={106} $a="#fff36a" $b="#ffffec"><GraphB /></GraphBox>
            <GraphOpts>
              <OptLine><Dot /> Extremes of the Driver</OptLine>
              <OptLine><Dot $on /> Map bounds</OptLine>
            </GraphOpts>
          </Graphs>
        </View3D>
        <Status><span>Size 21x23</span><Space $w={28} /><span>Checksum: NO</span></Status>
      </Win>

      {/* comparison table */}
      <Win $x={32} $y={272} $w={427} $h={228} $z={5}>
        <TitleBar $h={10} $pad={3} $dim><TitleIcon /><TitleText>Fuel quantity injected f(RPM,Trq) #1 - 0x0CBF30 (map 1/1) - 21x21 - Allowed Values:-655,00 .. 655,35 mg/rdk</TitleText><Caption $dim><span>–</span><span>▫</span><span>×</span></Caption></TitleBar>
        <MenuBar $h={8} $pad={2}>
          {["File","View","Help"].map((m) => <span key={m}>{m}</span>)}
        </MenuBar>
        <ColorBand $h={15.5}>
          <OrangeBox><T k="home" /><T k="stack" /><T k="win" t="≡" /><T k="win" t="m" /><Sep $w={3} /><T k="brush" /></OrangeBox>
          <OrangeBox><T k="win" t="▫" on /><T k="win" t="○" on /><T k="win" t="≡" on /><T k="win" t="%" on /></OrangeBox>
          <ModBox>Mod.<Field $w={11} $grey>NO</Field></ModBox>
          <OrangeTitle>COMPARISON PROJECT</OrangeTitle>
        </ColorBand>
        <TableWrap>
          <Table $cols="repeat(21, 18.3px)" $head={24}>
            <ColHead $dark>Nm|RPM</ColHead>
            {GREEN_COLS.map((c) => <ColHead key={c}>{c}</ColHead>)}
            {GREEN.map((r, i) => (
              <React.Fragment key={i}>
                <RowHead>{NM[i]}</RowHead>
                {r.map((v, j) => <GreenCell key={j}>{v}</GreenCell>)}
              </React.Fragment>
            ))}
          </Table>
          <BlackRest />
        </TableWrap>
        <BlackBar $h={12} />
        <Dash />
        <TableFoot $top={4}>
          <FileCol>
            <FileLine><FileLab $w={24}>Original</FileLab><FileVal $w={70}>JQB3280 PAJERO SPORT 2.5 AUTO mod</FileVal></FileLine>
            <FileLine><FileLab $w={24}>Modified</FileLab><FileVal $w={70} $red>JQB3280 PAJERO SPORT 2.5 AUTO mod</FileVal></FileLine>
          </FileCol>
          <Space $w={5} /><FileLab $w={27}>Data copied</FileLab>
          <SelBox $w={295} $h={16}>NO</SelBox>
        </TableFoot>
      </Win>

      {/* white table */}
      <Win $x={457} $y={277} $w={424} $h={223} $z={6}>
        <TitleBar $h={11} $pad={4} $dim><TitleIcon /><TitleText>Fuel quantity injected f(RPM,Trq) #1 - 0x0CBF30 (map 1/1) - 21x23 - Allowed Values:-655,00 .. 655,35 mg/rdk</TitleText><Caption $dim><span>–</span><span>▫</span><span>×</span></Caption></TitleBar>
        <MenuBar $h={6.5} $pad={1}>
          {["File","View","Manual change","Help"].map((m) => <span key={m}>{m}</span>)}
        </MenuBar>
        <Toolbar $h={15}>
          <T k="home" /><T k="stack" /><T k="win" t="≡" /><T k="win" t="m" /><T k="win" t="≡" /><Sep $w={3} />
          <T k="check" /><T k="cancel" /><T k="undo" /><Sep $w={3} /><T k="brush" /><Sep $w={3} />
          <T k="win" t="▫" /><T k="win" t="○" /><T k="win" t="≡" /><T k="split" /><T k="copy" /><T k="red" />
          <Lbl $w={17} $b>Mod.</Lbl><Field $w={12} $grey>NO</Field><Lbl $w={11}>←</Lbl><Field $w={19}>0,01</Field>
          <Space $w={10} /><Lbl $w={16} $b>Pg+ Pg-</Lbl><Field $w={18}>0,05</Field><Space $w={4} />
          <T k="win" t="%" on /><Space $w={2} /><Field $w={16}>0,0</Field><Lbl $w={9}>%</Lbl>
          <GroupBox><T k="win" t="m" /><T k="win" t="M" /><T k="win" t="≡" /><T k="pair" /></GroupBox><Sep $w={2} /><T k="win" t="U" /><T k="phones" />
        </Toolbar>
        <TableWrap>
          <Table $cols="repeat(18, 21.95px) 2.5px" $head={23}>
            <ColHead $dark>Nm|RPM</ColHead>
            {WHITE_COLS.map((c) => <ColHead key={c} $dark>{c}</ColHead>)}
            <ColHead $dark />
            {WHITE.map((r, i) => (
              <React.Fragment key={i}>
                <RowHead $dark>{NM[i]}</RowHead>
                {r.map((v, j) => <WhiteCell key={j} $g={Grey(i)}>{v}</WhiteCell>)}
                <WhiteCell $g={Grey(i)} />
              </React.Fragment>
            ))}
          </Table>
          <BlackRest />
        </TableWrap>
        <BlackBar $h={14} />
        <Dash>—</Dash>
        <TableFoot $top={7}>
          <FileCol>
            <FileLine><FileLab $w={23}>Original</FileLab><FileVal $w={71}>C:\..\HW#15LRA6.std</FileVal></FileLine>
            <FileLine><FileLab $w={23}>Modified</FileLab><FileVal $w={71} $red>C:\..\HW#15LRA6.std</FileVal></FileLine>
          </FileCol>
          <Space $w={5} /><FileLab $w={28}>Data copied</FileLab>
          <SelBox $w={286} $h={16}>NO</SelBox>
        </TableFoot>
      </Win>
    </Desktop>
  );
}
